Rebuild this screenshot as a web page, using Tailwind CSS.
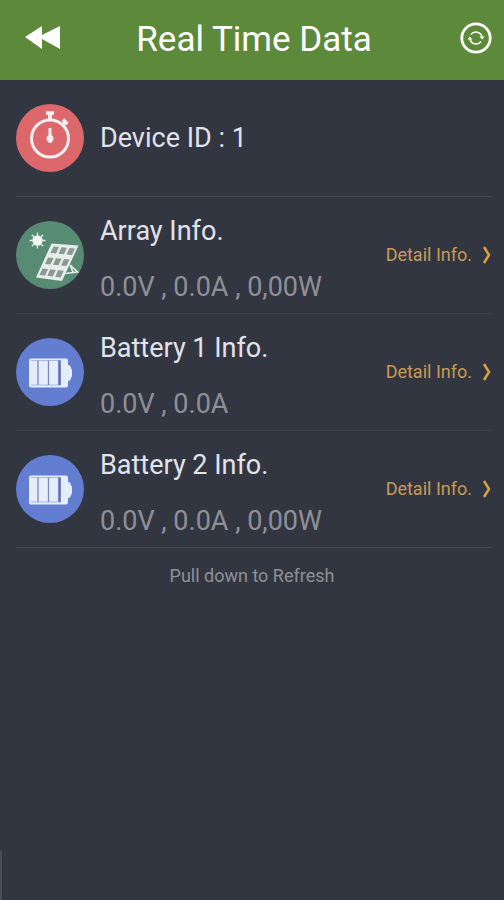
<!DOCTYPE html>
<html lang="en">
<head>
<meta charset="utf-8"/>
<title>Real Time Data</title>
<meta content="width=device-width, initial-scale=1.0" name="viewport"/>
<script src="https://cdn.jsdelivr.net/npm/@tailwindcss/browser@4"></script>
</head>
<body class="bg-[#323641] min-h-screen flex flex-col font-[Roboto,sans-serif] text-[#e2e3ea]">
<header class="h-20 bg-[#5c8a3a] text-white grid grid-cols-[48px_1fr_48px] items-center pl-6 pr-3 pb-1">
<button aria-label="Back" class="justify-self-start">
<svg class="w-9 h-6" fill="currentColor" viewBox="0 0 36 24"><path d="M1 11L18 0v9L36 0v23L18 13v10z"/></svg>
</button>
<h1 class="text-[35px] leading-10 pt-1 pr-2 text-center">Real Time Data</h1>
<button aria-label="Refresh" class="justify-self-end">
<svg class="w-8 h-8" fill="none" stroke="currentColor" viewBox="0 0 32 32">
<circle cx="16" cy="16" r="14.2" stroke-width="2.800"/>
<path d="M11 12.500a6.200 6.200 0 0 1 11 2.500M21 19.500a6.200 6.200 0 0 1-11-2.500" stroke-width="1.500"/>
<path d="M19.500 14.500h5l-2.300 3zM12.500 17.500h-5l2.300-3z" fill="currentColor" stroke="none"/>
</svg>
</button>
</header>
<main class="flex flex-col pl-4 pr-3">
<!-- Device -->
<section class="h-[117px] flex items-center gap-4 border-b border-[#434751]">
<svg class="w-[68px] h-[68px] shrink-0" fill="none" stroke="#f4eef2" viewBox="0 0 68 68">
<circle cx="34" cy="34" fill="#dc686c" r="34" stroke="none"/>
<circle cx="34" cy="34.500" r="18.500" stroke-width="3"/>
<path d="M30 9h8" stroke-width="3.500"/>
<path d="M34 9v7" stroke-width="4"/>
<path d="M45.500 22l4-4" stroke-width="3.500"/>
<path d="M47 15.500l4.500 4.500" stroke-width="3.500"/>
<path d="M34 24v15" stroke-width="3"/>
<circle cx="34" cy="34.500" fill="#f4eef2" r="3.500" stroke="none"/>
</svg>
<h2 class="text-[27px] leading-8">Device ID : 1</h2>
</section>
<!-- Array -->
<section class="h-[117px] flex items-center gap-4 border-b border-[#3c404b]">
<svg class="w-[68px] h-[68px] shrink-0" viewBox="0 0 68 68">
<circle cx="34" cy="34" fill="#588b73" r="34"/>
<circle cx="21.500" cy="19.500" fill="#f2f7f3" r="5.200"/>
<path d="M21.500 11.500v3M21.500 24.500v3M13.500 19.500h3M26.500 19.500h3M15.800 13.800l2 2M25.200 23.200l2 2M15.800 25.200l2-2M25.200 15.800l2-2" stroke="#e2ebe5" stroke-width="1.300"/>
<path d="M54 44l7.500 7-12 1.500M54 44l3 7" fill="none" stroke="#e7eeea" stroke-width="1.600"/>
<path d="M35.500 22.500l27 2L46 60 20 56.500z" fill="#e7eeea"/>
<g fill="#8a9896">
<path d="M37.500 25.500l5.500.5-3 6.500-5.500-.5zM45.500 26.200l5.500.5-3 6.500-5.500-.5zM53.500 26.900l5.500.5-3 6.500-5.500-.5z"/>
<path d="M32 36.500l5.500.5-3 6.500-5.500-.5zM40 37.200l5.500.6-3 6.500-5.500-.6zM48 38l5.500.6-3 6.500-5.500-.6z"/>
<path d="M26.500 47.500l5.500.6-3 6.500-5.500-.6zM34.300 48.300l5.500.7-3 6.500-5.500-.7zM42.200 49.200l5.500.6-3 6.600-5.500-.7z"/>
</g>
</svg>
<div class="flex-1 pt-2">
<h2 class="text-[27px] leading-8 mb-6">Array Info.</h2>
<p class="text-[27px] leading-8 text-[#8e9097]">0.0V , 0.0A , 0,00W</p>
</div>
<a class="flex items-center gap-2 text-lg leading-6 text-[#c99a55]" href="#array">Detail Info.
<svg class="w-3 h-5" fill="none" stroke="#d9a041" stroke-width="2.500" viewBox="0 0 12 20"><path d="M4 2l5 8-5 8"/></svg>
</a>
</section>
<!-- Battery 1 -->
<section class="h-[117px] flex items-center gap-4 border-b border-[#3c404b]">
<svg class="w-[68px] h-[68px] shrink-0" viewBox="0 0 68 68">
<circle cx="34" cy="34" fill="#637dd1" r="34"/>
<path d="M15 20.500h35q2 0 2 2V27q2.500 0 3 3l1 2v6l-1 2q-.5 3-3 3v4.500q0 2-2 2H15q-2 0-2-2v-25q0-2 2-2z" fill="#e6edfa"/>
<path d="M15 22.500h30M15 47h30" stroke="#a9b8e6"/>
<path d="M22 22.500V47M32.500 22.500V47" stroke="#7c8ab8" stroke-width="1.300"/>
<path d="M43.500 22.500V47" stroke="#5a70bd" stroke-width="2.600"/>
</svg>
<div class="flex-1 pt-2">
<h2 class="text-[27px] leading-8 mb-6">Battery 1 Info.</h2>
<p class="text-[27px] leading-8 text-[#8e9097]">0.0V , 0.0A</p>
</div>
<a class="flex items-center gap-2 text-lg leading-6 text-[#c99a55]" href="#battery1">Detail Info.
<svg class="w-3 h-5" fill="none" stroke="#d9a041" stroke-width="2.500" viewBox="0 0 12 20"><path d="M4 2l5 8-5 8"/></svg>
</a>
</section>
<!-- Battery 2 -->
<section class="h-[117px] flex items-center gap-4 border-b border-[#434751]">
<svg class="w-[68px] h-[68px] shrink-0" viewBox="0 0 68 68">
<circle cx="34" cy="34" fill="#637dd1" r="34"/>
<path d="M15 20.500h35q2 0 2 2V27q2.500 0 3 3l1 2v6l-1 2q-.5 3-3 3v4.500q0 2-2 2H15q-2 0-2-2v-25q0-2 2-2z" fill="#e6edfa"/>
<path d="M15 22.500h30M15 47h30" stroke="#a9b8e6"/>
<path d="M22 22.500V47M32.500 22.500V47" stroke="#7c8ab8" stroke-width="1.300"/>
<path d="M43.500 22.500V47" stroke="#5a70bd" stroke-width="2.600"/>
</svg>
<div class="flex-1 pt-2">
<h2 class="text-[27px] leading-8 mb-6">Battery 2 Info.</h2>
<p class="text-[27px] leading-8 text-[#8e9097]">0.0V , 0.0A , 0,00W</p>
</div>
<a class="flex items-center gap-2 text-lg leading-6 text-[#c99a55]" href="#battery2">Detail Info.
<svg class="w-3 h-5" fill="none" stroke="#d9a041" stroke-width="2.500" viewBox="0 0 12 20"><path d="M4 2l5 8-5 8"/></svg>
</a>
</section>
</main>
<p class="pt-4 text-center text-lg leading-6 text-[#8e9097]">Pull down to Refresh</p>
<!-- Scroll edge -->
<div class="mt-auto w-[2px] h-[50px] bg-[#484d59] rounded-tr-sm"></div>
</body>
</html>
